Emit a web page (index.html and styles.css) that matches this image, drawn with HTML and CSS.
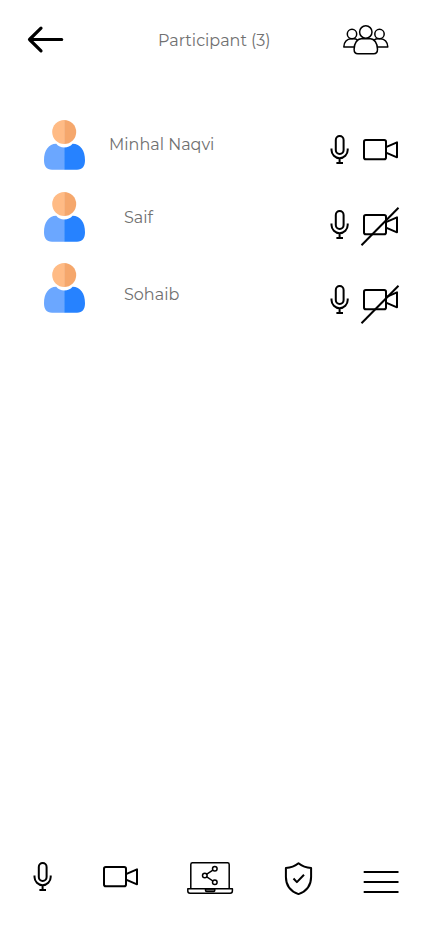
FILE: index.html
```html
<!DOCTYPE html>
<html lang="en">
<head>
<meta charset="utf-8">
<meta name="viewport" content="width=device-width">
<title>Participants</title>
<link rel="stylesheet" href="styles.css">
</head>
<body>
<svg width="0" height="0" class="defs" aria-hidden="true">
  <symbol id="mic" viewBox="0 0 20 30">
    <rect x="5.8" y="1" width="7.8" height="18" rx="3.9"/>
    <path d="M1.5 13.5v1.6a8.1 8.1 0 0 0 16.2 0v-1.6M9.6 23.2V28M6.4 28h6.6"/>
  </symbol>
  <symbol id="camera" viewBox="0 0 38 24">
    <rect x="2" y="2" width="22" height="19.2" rx="1.8"/>
    <path d="M24 9.2l11-4.9v15l-11-4.7"/>
  </symbol>
  <symbol id="person" viewBox="0 0 42 50">
    <path fill="#ffbb85" d="M20.2 0a12 12 0 0 0 0 24z"/>
    <path fill="#f5a76c" d="M20.2 0a12 12 0 0 1 0 24z"/>
    <path fill="#6ba7ff" d="M20.2 27.5c-3.300 0-5.800-1.200-8-3.700C4.500 24 0 30.700 0 40.200 0 45.900 2.500 49.700 8 49.700h12.200z"/>
    <path fill="#2682ff" d="M20.200 27.500c3.500 0 6.200-1.200 8.400-3.700C36.500 24 41 30.700 41 40.200c0 5.700-2.500 9.500-8 9.500H20.200z"/>
  </symbol>
</svg>
<div class="screen">
  <header class="header">
    <svg class="icon back" width="40" height="32" viewBox="26 24 40 32"><path d="M41 28.200L29.500 39.500 41 50.800M29.500 39.500H61.700"/></svg>
    <h1 class="title">Participant (3)</h1>
    <svg class="icon people" width="48" height="32" viewBox="342 24 48 32">
      <circle cx="365.800" cy="32" r="6.200"/><circle cx="352" cy="34" r="4.700"/><circle cx="379.500" cy="34" r="4.700"/>
      <path d="M361.300 38.800h9c4 0 7.200 4.500 7.200 10.400 0 2.900-1.500 4.500-3.800 4.500h-15.800c-2.300 0-3.800-1.600-3.800-4.500 0-5.900 3.200-10.400 7.200-10.400z"/>
      <path d="M357.500 40c-1-.8-2.200-1.200-4-1.200h-2.400c-4 0-7.300 3.400-7.300 8.200h10.700M374.100 40c1-.8 2.200-1.200 4-1.200h2.400c4 0 7.300 3.400 7.300 8.200h-10.700"/>
    </svg>
  </header>
  <main class="list">
    <div class="avatars">
      <svg width="42" height="50"><use href="#person"/></svg>
      <svg width="42" height="50"><use href="#person"/></svg>
      <svg width="42" height="50"><use href="#person"/></svg>
    </div>
    <div class="names">
      <p class="name">Minhal Naqvi</p>
      <p class="name saif">Saif</p>
      <p class="name sohaib">Sohaib</p>
    </div>
    <div class="controls">
      <div class="control"><svg class="icon" width="20" height="30"><use href="#mic"/></svg><svg class="icon cam" width="38" height="24"><use href="#camera"/></svg></div>
      <div class="control"><svg class="icon" width="20" height="30"><use href="#mic"/></svg><svg class="icon cam" width="38" height="24"><use href="#camera"/><path d="M-.5 32.200L36.500 -5.300"/></svg></div>
      <div class="control"><svg class="icon" width="20" height="30"><use href="#mic"/></svg><svg class="icon cam" width="38" height="24"><use href="#camera"/><path d="M-.5 35.200L36.500 -2.300"/></svg></div>
    </div>
  </main>
  <nav class="toolbar">
    <svg class="icon" width="20" height="30"><use href="#mic"/></svg>
    <svg class="icon tool-cam" width="38" height="24"><use href="#camera"/></svg>
    <svg class="icon laptop" width="48" height="36" viewBox="186 860 48 36">
      <path d="M190.800 888.500v-24c0-1.100.6-1.700 1.700-1.700h35c1.100 0 1.700.6 1.700 1.700v24M187.800 888.800h44.600v2.200c0 1.400-.8 2.200-2.200 2.200H190c-1.400 0-2.200-.8-2.200-2.200z"/>
      <path class="notch" d="M205.500 889h9.300v1.200c0 .8-.4 1.200-1.200 1.200h-6.900c-.8 0-1.200-.4-1.200-1.200z"/>
      <circle cx="204.800" cy="875.500" r="2.300"/><circle cx="214.800" cy="868.800" r="2.300"/><circle cx="214.800" cy="882.300" r="2.300"/>
      <path d="M206.800 874.200l6.100-4.100M206.800 876.900l6.100 4.100"/>
    </svg>
    <svg class="icon shield" width="30" height="36" viewBox="284 860 30 36"><path d="M298.500 863.300c-3.500 2.900-7.700 4.500-12.600 4.600v9c0 8.500 4.500 14.200 12.600 17.200 8.100-3 12.600-8.700 12.600-17.200v-9c-4.900-.1-9.100-1.700-12.600-4.600zM293.500 878.500l3.400 3.600 7.100-7.400"/></svg>
    <svg class="icon menu" width="36" height="24" viewBox="363 870 36 24"><path d="M363.700 872h34.800M363.700 882h34.800M363.700 892h34.800"/></svg>
  </nav>
</div>
</body>
</html>
```

FILE: styles.css
```css
* { box-sizing: border-box; }
body {
  margin: 0;
  background: #fff;
  color: #707070;
  font-family: Montserrat, Inter, "Liberation Sans", sans-serif;
}
.defs, svg { display: block; flex: none; }
.screen {
  width: 428px;
  height: 926px;
  display: flex;
  flex-direction: column;
}
.icon {
  fill: none;
  stroke: #000;
  stroke-width: 2;
  stroke-linejoin: round;
  overflow: visible;
}
.header {
  height: 120px;
  padding: 24px 38px 0 26px;
  display: flex;
  justify-content: space-between;
  align-items: flex-start;
}
.back { stroke-width: 3.2; stroke-linecap: round; }
.people { stroke-width: 1.5; }
.title, .name {
  margin: 0;
  font-size: 16px;
  font-weight: 400;
  line-height: 20px;
  white-space: nowrap;
}
.title {
  width: 114px;
  margin: 7px 0 0 22px;
}
.list {
  flex: 1;
  display: flex;
  align-items: flex-start;
  padding-left: 44px;
}
.avatars { display: grid; gap: 21.5px; }
.names { width: 221px; padding: 15px 0 0 23px; }
.saif { margin: 53px 0 0 15px; }
.sohaib { margin: 57px 0 0 15px; }
.controls {
  display: grid;
  gap: 45px;
  padding: 15px 0 0 23px;
}
.control { display: flex; gap: 12px; }
.cam { margin-top: 3px; }
.toolbar {
  height: 66px;
  padding: 0 29px 0 33px;
  display: flex;
  align-items: flex-start;
}
.toolbar .icon { margin-top: 2px; }
.toolbar .tool-cam { margin: 5px 0 0 49px; }
.toolbar .laptop { margin: 0 0 0 46px; }
.toolbar .shield { margin: 0 0 0 50px; }
.laptop { stroke-width: 1.5; }
.notch { fill: #777; }
.toolbar .menu { margin: 10px 0 0 49px; }
```
